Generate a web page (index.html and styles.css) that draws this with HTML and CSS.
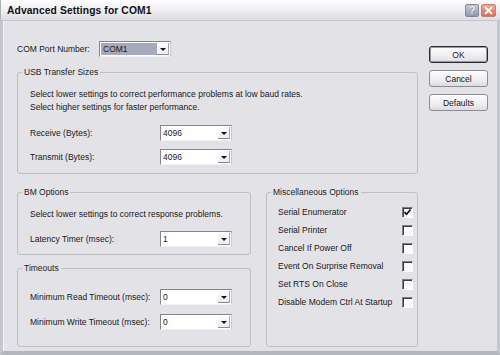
FILE: index.html
```html
<!DOCTYPE html>
<html>
<head>
<meta charset="utf-8">
<title>Advanced Settings for COM1</title>
<link rel="stylesheet" href="styles.css">
</head>
<body>
<div class="window">
  <div class="titlebar">
    <span class="title">Advanced Settings for COM1</span>
    <div class="tb-buttons">
      <span class="tb-btn help">?</span>
      <span class="tb-btn close"><svg width="9" height="9" viewBox="0 0 9 9"><path d="M1 1L8 8M8 1L1 8" stroke="#fff" stroke-width="1.8" fill="none"/></svg></span>
    </div>
  </div>
  <div class="frame">
    <div class="main">
      <div class="com-row">
        <span class="com-label">COM Port Number:</span>
        <div class="combo focused"><span class="val">COM1</span><span class="drop"><span class="tri"></span></span></div>
      </div>

      <fieldset class="group usb">
        <legend>USB Transfer Sizes</legend>
        <div class="gbody">
          <p class="desc">Select lower settings to correct performance problems at low baud rates.<br>Select higher settings for faster performance.</p>
          <div class="field first"><span class="lbl">Receive (Bytes):</span><div class="combo"><span class="val">4096</span><span class="drop"><span class="tri"></span></span></div></div>
          <div class="field"><span class="lbl">Transmit (Bytes):</span><div class="combo"><span class="val">4096</span><span class="drop"><span class="tri"></span></span></div></div>
        </div>
      </fieldset>

      <div class="lower">
        <div class="lower-left">
          <fieldset class="group bm">
            <legend>BM Options</legend>
            <div class="gbody">
              <p class="desc">Select lower settings to correct response problems.</p>
              <div class="field latency"><span class="lbl">Latency Timer (msec):</span><div class="combo"><span class="val">1</span><span class="drop"><span class="tri"></span></span></div></div>
            </div>
          </fieldset>
          <fieldset class="group timeouts">
            <legend>Timeouts</legend>
            <div class="gbody">
              <div class="field"><span class="lbl">Minimum Read Timeout (msec):</span><div class="combo"><span class="val">0</span><span class="drop"><span class="tri"></span></span></div></div>
              <div class="field second"><span class="lbl">Minimum Write Timeout (msec):</span><div class="combo"><span class="val">0</span><span class="drop"><span class="tri"></span></span></div></div>
            </div>
          </fieldset>
        </div>
        <fieldset class="group misc">
          <legend>Miscellaneous Options</legend>
          <div class="gbody">
            <div class="opt"><span>Serial Enumerator</span><span class="check on"><svg width="9" height="9" viewBox="0 0 9 9"><path d="M1.5 4L3.5 6.3L7.5 1.5" stroke="#111" stroke-width="1.7" fill="none"/></svg></span></div>
            <div class="opt"><span>Serial Printer</span><span class="check"></span></div>
            <div class="opt"><span>Cancel If Power Off</span><span class="check"></span></div>
            <div class="opt"><span>Event On Surprise Removal</span><span class="check"></span></div>
            <div class="opt"><span>Set RTS On Close</span><span class="check"></span></div>
            <div class="opt"><span>Disable Modem Ctrl At Startup</span><span class="check"></span></div>
          </div>
        </fieldset>
      </div>
    </div>
    <div class="side">
      <button class="btn default">OK</button>
      <button class="btn">Cancel</button>
      <button class="btn">Defaults</button>
    </div>
  </div>
</div>
</body>
</html>
```

FILE: styles.css
```css
html, body {
  margin: 0;
  padding: 0;
}
body {
  width: 500px;
  height: 355px;
  overflow: hidden;
  font-family: "Liberation Sans", Arial, sans-serif;
  font-size: 8.5px;
  line-height: 13px;
  color: #18181c;
  background: #e3e3e7;
}
.window {
  width: 500px;
  height: 355px;
  display: flex;
  flex-direction: column;
}
.titlebar {
  height: 21px;
  box-sizing: border-box;
  display: flex;
  align-items: center;
  justify-content: space-between;
  padding: 0 4px 0 6px;
  background: linear-gradient(#fefeff 0%, #f3f3f6 40%, #dcdce2 100%);
  border-bottom: 1px solid #c4c4cc;
  border-left: 1px solid #b0b0b8;
}
.title {
  font-weight: bold;
  font-size: 10.3px;
  color: #111114;
  letter-spacing: 0.1px;
}
.tb-buttons {
  display: flex;
  gap: 2px;
}
.tb-btn {
  width: 14px;
  height: 13px;
  box-sizing: border-box;
  border-radius: 2px;
  display: flex;
  align-items: center;
  justify-content: center;
}
.help {
  background: linear-gradient(#c8cedb, #8f98ad);
  border: 1px solid #8088a0;
  color: #fff;
  font-weight: bold;
  font-size: 11px;
  text-shadow: 0 0 1px #333;
}
.close {
  width: 15px;
  background: linear-gradient(#f2a898, #dc6f58);
  border: 1px solid #c98070;
}
.frame {
  flex: 1;
  display: flex;
  padding: 20px 0 0 14px;
  border-left: 3px solid #c6c6ce;
  border-right: 3px solid #c6c6ce;
  border-bottom: 4px solid #b6b6be;
  box-shadow: inset 1px 0 0 #f2f2f4;
}
.main {
  width: 401px;
  display: flex;
  flex-direction: column;
}
.com-row {
  display: flex;
  align-items: center;
  height: 16px;
}
.com-label {
  width: 82px;
}
.combo {
  width: 72px;
  height: 16px;
  box-sizing: border-box;
  display: flex;
  background: #fff;
  border: 1px solid;
  border-color: #85858e #c9c9ce #f1f1f4 #85858e;
}
.combo .val {
  flex: 1;
  padding-left: 2px;
  line-height: 14px;
}
.combo.focused .val {
  background: #a9a9bd;
  color: #1a1a22;
  margin: 1px 0 1px 1px;
  line-height: 12px;
  padding-left: 2px;
}
.drop {
  width: 12px;
  margin: 1px 1px 1px 0;
  box-sizing: border-box;
  background: linear-gradient(#fdfdfd, #ececf0);
  border-right: 1px solid #a8a8b0;
  border-bottom: 1px solid #8c8c94;
  display: flex;
  align-items: center;
  justify-content: center;
}
.tri {
  width: 0;
  height: 0;
  border-left: 3px solid transparent;
  border-right: 3px solid transparent;
  border-top: 3px solid #111;
  margin-top: 1px;
}
.group {
  margin: 0;
  padding: 0;
  box-sizing: border-box;
  border: 1px solid #bfbfc6;
  border-radius: 3px;
  min-width: 0;
}
.group legend {
  margin-left: 4px;
  padding: 0 2px;
  line-height: 12px;
  color: #222226;
}
.gbody {
  padding-left: 12px;
}
.desc {
  margin: 0;
  line-height: 13px;
  white-space: nowrap;
}
.field {
  display: flex;
  align-items: center;
  height: 16px;
  margin-top: 8px;
}
.lbl {
  width: 130px;
  white-space: nowrap;
}
.usb {
  margin-top: 9px;
  height: 108px;
}
.usb .gbody {
  padding-top: 10px;
}
.usb .field.first {
  margin-top: 11px;
}
.lower {
  display: flex;
  margin-top: 12px;
  gap: 15px;
}
.lower-left {
  width: 234px;
  display: flex;
  flex-direction: column;
}
.bm {
  height: 69px;
}
.bm .gbody {
  padding-top: 10px;
}
.bm .field.latency {
  margin-top: 10px;
}
.timeouts {
  margin-top: 7px;
  height: 85px;
}
.timeouts .gbody {
  padding-top: 15px;
}
.timeouts .field:first-child {
  margin-top: 0;
}
.timeouts .field.second {
  margin-top: 9px;
}
.misc {
  width: 152px;
  height: 161px;
}
.misc .gbody {
  padding: 5px 4px 0 11px;
}
.opt {
  height: 18px;
  display: flex;
  align-items: center;
  justify-content: space-between;
  white-space: nowrap;
}
.check {
  width: 11px;
  height: 11px;
  flex: none;
  box-sizing: border-box;
  background: #fbfbfc;
  border: 1px solid;
  border-color: #7c7c84 #ffffff #ffffff #7c7c84;
  box-shadow: inset 1px 1px 0 #3c3c40;
  display: flex;
  align-items: center;
  justify-content: center;
}
.side {
  margin-left: 11px;
  padding-top: 5px;
  display: flex;
  flex-direction: column;
  gap: 7px;
}
.btn {
  width: 59px;
  height: 17px;
  box-sizing: border-box;
  padding: 0;
  margin: 0;
  font-family: inherit;
  font-size: 8.5px;
  color: #18181c;
  border: 1px solid #8e8e98;
  border-radius: 3px;
  background: linear-gradient(#fdfdfd, #ebebee 70%, #dcdce0);
}
.btn.default {
  border: 1px solid #2a2a2e;
  box-shadow: inset 0 0 0 1px #9a9aa4;
}
```
